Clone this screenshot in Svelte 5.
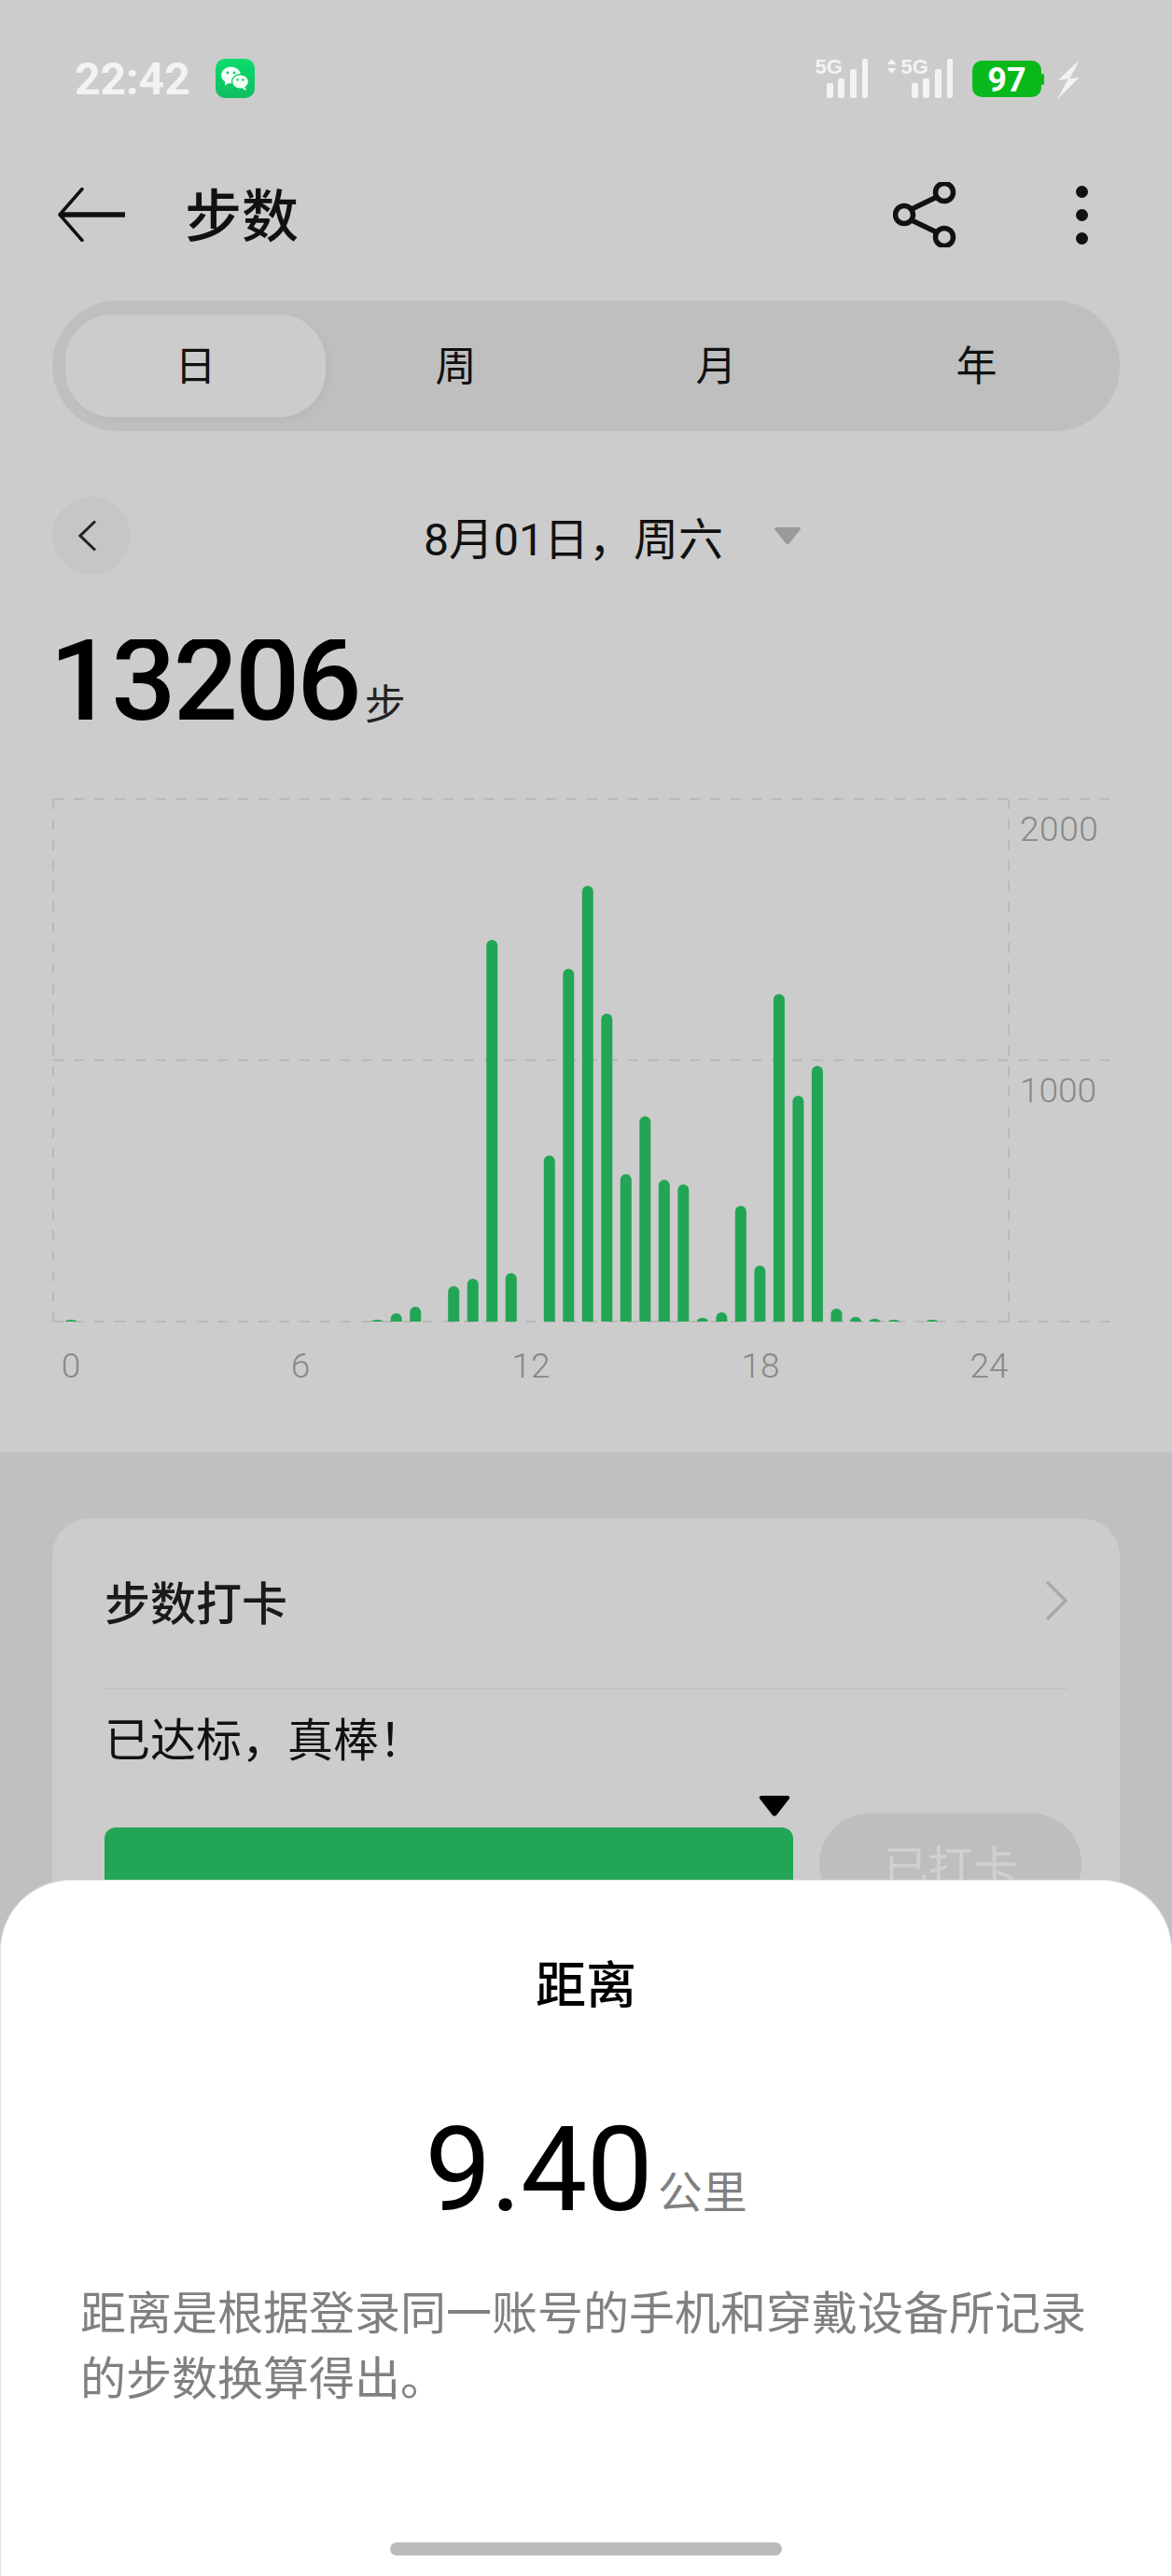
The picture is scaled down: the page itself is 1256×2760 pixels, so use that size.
<script>
  const heights = {0:2,16:2,17:9,18:16,20:38,21:46,22:409,23:52,25:178,26:378,27:467,28:330,29:158,30:220,31:152,32:147,33:4,34:10,35:124,36:60,37:351,38:242,39:274,40:14,41:5,42:3,43:2,45:2};
  const base = 1416;
  const bars = Object.entries(heights).map(([i, h]) => {
    const x = 76 + Number(i) * 20.51;
    const r = Math.min(6, h);
    return `M${x - 6} ${base}V${base - h + r}A6 ${r} 0 0 1 ${x} ${base - h}A6 ${r} 0 0 1 ${x + 6} ${base - h + r}V${base}Z`;
  });
  const xLabels = [[76, '0'], [322, '6'], [569, '12'], [815, '18'], [1060, '24']];
  const tabs = ['日', '周', '月', '年'];
</script>

<div class="page">
  <header class="status">
    <span class="time">22:42</span>
    <svg class="wechat" width="42" height="42" viewBox="0 0 42 42">
      <defs><linearGradient id="wg" x1="0" y1="0" x2="0" y2="1"><stop offset="0" stop-color="#0bdc6c"/><stop offset="1" stop-color="#10bd62"/></linearGradient></defs>
      <rect width="42" height="42" rx="10" fill="url(#wg)"/>
      <ellipse cx="16.500" cy="17.500" rx="10.500" ry="9" fill="#f4fff8"/>
      <path d="M10 23l0 5.500 5.500-3z" fill="#f4fff8"/>
      <ellipse cx="26.500" cy="24.500" rx="9" ry="7.700" fill="#f4fff8" stroke="#0fcc68" stroke-width="1.400"/>
      <path d="M31 30l2.500 4-5-2z" fill="#f4fff8"/>
      <circle cx="13" cy="15" r="1.400" fill="#0fcc68"/><circle cx="20" cy="15" r="1.400" fill="#0fcc68"/>
      <circle cx="23.500" cy="22.500" r="1.200" fill="#0fcc68"/><circle cx="29.500" cy="22.500" r="1.200" fill="#0fcc68"/>
    </svg>
    <svg class="sys" width="300" height="68" viewBox="870 50 300 68">
      <g fill="#f3f3f3">
        <text x="873.500" y="79" class="g5">5G</text>
        <rect x="886" y="89" width="7" height="16" rx="2"/><rect x="898" y="84" width="7" height="21" rx="2"/><rect x="911" y="74" width="7" height="31" rx="2"/><rect x="924" y="63" width="6" height="42" rx="2"/>
        <path d="M955.500 63l5 6h-10zM955.500 79l5-6h-10z"/>
        <text x="965.500" y="79" class="g5">5G</text>
        <rect x="977" y="89" width="7" height="16" rx="2"/><rect x="989" y="84" width="7" height="21" rx="2"/><rect x="1002" y="74" width="7" height="31" rx="2"/><rect x="1015" y="63" width="6" height="42" rx="2"/>
        <path d="M1156 65L1134 86L1145 84.500L1133 106L1157 83L1146 84.500L1153 72Z"/>
      </g>
      <rect x="1042" y="65" width="74" height="39" rx="10" fill="#09b91c"/>
      <rect x="1116" y="79" width="3" height="12" rx="1.500" fill="#09b91c"/>
      <text x="1079" y="98" class="batt">97</text>
    </svg>
  </header>

  <nav class="nav">
    <svg class="back" width="72" height="58" viewBox="0 0 72 58" fill="none" stroke="#111" stroke-linecap="round" stroke-linejoin="round"><path d="M26 1.500L2 29l24 27.500" stroke-width="3.500"/><path d="M4 29h67" stroke-width="5.500"/></svg>
    <h1 class="title">步数</h1>
    <svg class="share" width="68" height="70" viewBox="0 0 68 70" fill="none" stroke="#111" stroke-width="5.500"><circle cx="12" cy="35" r="9.500"/><circle cx="55" cy="11" r="9.500"/><circle cx="55" cy="59" r="9.500"/><path d="M20 29L47 16M20 41l27 13" /></svg>
    <div class="dots"><i></i><i></i><i></i></div>
  </nav>

  <div class="segment">
    {#each tabs as t, i}
      <div class="tab" class:active={i === 0}>{t}</div>
    {/each}
  </div>

  <div class="date-row">
    <div class="circle"><svg width="20" height="34" viewBox="0 0 20 34"><path d="M18 1.500L2 17l16 15.500" fill="none" stroke="#222" stroke-width="3"/></svg></div>
    <span class="date">8月01日，周六</span>
    <svg class="tri" width="30" height="20" viewBox="0 0 30 20"><path d="M3 1h24q3 0 1.500 2.500L17 18q-2 2-4 0L1.500 3.500Q0 1 3 1z" fill="#9a9a9a"/></svg>
  </div>

  <div class="total"><span class="num">13206</span><span class="unit">步</span></div>

  <svg class="chart" width="1256" height="640" viewBox="0 850 1256 640">
    <g stroke="#b9b9b9" stroke-width="2" stroke-dasharray="11 11" fill="none">
      <path d="M57 856H1189M57 1136H1189M57 1416H1189M57 856V1416M1081 856V1416"/>
    </g>
    {#each bars as d}<path {d} fill="#22a655"/>{/each}
    <text x="1093" y="901" class="ax wide">2000</text>
    <text x="1093" y="1181" class="ax">1000</text>
    {#each xLabels as [x, t]}<text {x} y="1476" class="ax mid">{t}</text>{/each}
  </svg>

  <section class="lower">
    <div class="card">
      <div class="card-head">
        <span>步数打卡</span>
        <svg width="24" height="42" viewBox="0 0 24 42"><path d="M2 1l20 20L2 41" fill="none" stroke="#a8a8a8" stroke-width="3.500"/></svg>
      </div>
      <div class="card-text">已达标，真棒！</div>
      <div class="marker-row"><svg width="34" height="22" viewBox="0 0 34 22"><path d="M3 0h28q3 0 2 3L19 21q-2 1.500-4 0L1 3Q0 0 3 0z" fill="#000"/></svg></div>
      <div class="progress-row">
        <div class="progress"></div>
        <div class="done">已打卡</div>
      </div>
    </div>
  </section>

  <aside class="sheet">
    <h2 class="sheet-title">距离</h2>
    <div class="dist"><span class="dist-num">9.40</span><span class="dist-unit">公里</span></div>
    <p class="desc">距离是根据登录同一账号的手机和穿戴设备所记录的步数换算得出。</p>
    <div class="home"></div>
  </aside>
</div>

<style>
  :global(body) { margin: 0; }
  .page {
    position: relative; width: 1256px; height: 2760px; overflow: hidden; background: #ccc;
    font-family: Roboto, "Noto Sans CJK SC", sans-serif; color: #111;
  }
  .status { height: 168px; display: flex; align-items: center; padding: 0 0 0 80px; box-sizing: border-box; }
  .time { font-size: 48px; font-weight: 700; color: #f3f3f3; width: 151px; font-family: Roboto, sans-serif; }
  .wechat { flex: none; }
  .sys { margin-left: 597px; flex: none; }
  .g5 { font: 700 22px "Liberation Sans", sans-serif; }
  .batt { font: 700 36px Roboto, sans-serif; fill: #fff; text-anchor: middle; }
  .nav { height: 124px; display: flex; align-items: center; padding: 0 90px 0 62px; }
  .back { flex: none; }
  .title { margin: 6px 0 0 64px; font-size: 61px; font-weight: 500; flex: 1; line-height: 1; }
  .share { flex: none; margin-right: 128px; }
  .dots { display: flex; flex-direction: column; gap: 12px; }
  .dots i { width: 13px; height: 13px; border-radius: 50%; background: #111; }
  .segment {
    margin: 30px 56px 0; height: 140px; border-radius: 70px; background: #bfbfbf; padding: 0 14px;
    display: grid; grid-template-columns: repeat(4, 1fr); align-items: center;
  }
  .tab { height: 110px; padding-bottom: 6px; box-sizing: border-box; display: flex; align-items: center; justify-content: center; font-size: 44px; border-radius: 50px; }
  .tab.active { background: #ccc; box-shadow: 4px 4px 6px rgba(0, 0, 0, .03); }
  .date-row { margin: 70px 0 0 56px; height: 84px; display: flex; align-items: center; }
  .circle { width: 84px; height: 84px; border-radius: 50%; background: #c6c6c6; display: flex; align-items: center; justify-content: center; flex: none; padding-right: 8px; box-sizing: border-box; }
  .date { margin-left: 314px; width: 375px; font-size: 48px; white-space: nowrap; flex: none; }
  .tri { flex: none; }
  .total { margin: 69px 0 0 53px; height: 105px; overflow: hidden; display: flex; align-items: flex-start; color: #000; }
  .num { font-size: 122px; line-height: 122px; font-weight: 500; margin-top: -16px; font-family: Roboto, sans-serif; letter-spacing: -3px; }
  .unit { font-size: 44px; line-height: 44px; color: #222; margin: 49px 0 0 6px; }
  .chart { display: block; margin-top: 60px; }
  .ax { font-size: 37px; font-weight: 300; fill: #888; font-family: Roboto, sans-serif; }
  .wide { letter-spacing: .6px; }
  .mid { text-anchor: middle; }
  .lower { margin-top: 66px; height: 1204px; background: #bfc0c2; padding: 71px 56px 0; }
  .card { background: #ccc; border-radius: 40px; padding: 0 56px; height: 1000px; }
  .card-head { height: 183px; padding-bottom: 6px; box-sizing: border-box; display: flex; align-items: center; justify-content: space-between; border-bottom: 2px solid #c2c2c2; font-size: 49px; font-weight: 500; color: #1a1a1a; }
  .card-text { font-size: 49px; line-height: 112px; height: 114px; }
  .marker-row { display: flex; height: 21px; padding-left: 701px; }
  .marker-row svg { flex: none; }
  .progress-row { display: flex; margin-top: -6px; align-items: flex-start; }
  .progress { width: 738px; height: 120px; margin-top: 19px; background: #22a655; border-radius: 12px 12px 0 0; flex: none; }
  .done { width: 281px; height: 108px; margin-left: 28px; border-radius: 54px; background: #bebebe; color: #d0d0d0; font-size: 48px; display: flex; align-items: center; justify-content: center; flex: none; margin-top: 4px; }
  .sheet {
    position: absolute; left: 0; right: 0; top: 2014px; bottom: 0; background: #fff;
    border-radius: 76px 76px 0 0; border: 1px solid #e4e4e4; border-bottom: 0; box-sizing: border-box;
  }
  .sheet-title { margin: 84px 0 0; text-align: center; font-size: 54px; font-weight: 500; line-height: 60px; color: #000; }
  .dist { margin-top: 105px; display: flex; justify-content: center; align-items: flex-start; height: 122px; color: #000; }
  .dist-num { font-size: 127px; line-height: 122px; font-family: Roboto, sans-serif; font-weight: 400; letter-spacing: -1px; }
  .dist-unit { font-size: 48px; line-height: 48px; color: #808080; margin: 62px 0 0 6px; }
  .desc { margin: 59px 0 0; padding: 0 85px; font-size: 49px; line-height: 70px; color: #808080; }
  .home { position: absolute; left: 417px; top: 709px; width: 420px; height: 14px; border-radius: 7px; background: #bbb; }
</style>
